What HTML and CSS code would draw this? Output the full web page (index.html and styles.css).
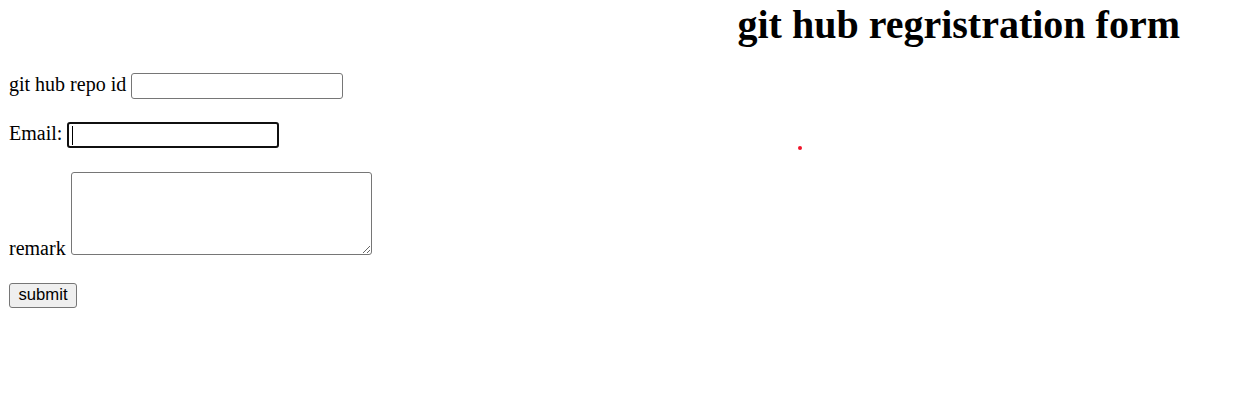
FILE: index.html
```html
<!DOCTYPE html>
<html lang="en">
<head>
<meta charset="utf-8">
<title>git hub regristration form</title>
<link rel="stylesheet" href="styles.css">
</head>
<body>
<h1 class="title">git hub regristration form</h1>
<form class="form">
  <p class="row">git hub repo id <input class="field" type="text"></p>
  <p class="row">Email: <span class="focus-wrap"><input class="field field-focus" type="email"><span class="caret"></span></span></p>
  <p class="row row-remark">remark <textarea class="remark"></textarea></p>
  <p class="row row-submit"><button class="submit" type="button">submit</button></p>
</form>
<span class="dot"></span>
</body>
</html>
```
FILE: styles.css
```css
html, body {
  background: #fff;
}
body {
  margin: 0 10px 10px 9px;
  font-family: "Liberation Serif", "Times New Roman", serif;
  font-size: 20px;
  color: #000;
  position: relative;
}
.title {
  margin: 0;
  padding-top: 1px;
  font-size: 40px;
  font-weight: bold;
  text-align: right;
  padding-right: 52px;
}
.form {
  margin: 0;
  padding-top: 2px;
}
.row {
  margin: 23px 0;
}
.row-remark {
  margin-top: 24px;
  margin-bottom: 22px;
}
.row-submit {
  margin-top: 22px;
}
.field {
  box-sizing: border-box;
  width: 212px;
  height: 26px;
  border: 1px solid #767676;
  border-radius: 3px;
  padding: 2px 4px;
  font-family: "Liberation Sans", Arial, sans-serif;
  font-size: 16.67px;
  margin: 0;
  background: #fff;
  vertical-align: baseline;
}
.focus-wrap {
  position: relative;
  display: inline-block;
}
.field-focus {
  border: 2px solid #101010;
  outline: none;
}
.caret {
  position: absolute;
  left: 5px;
  top: 4px;
  width: 1px;
  height: 19px;
  background: #000;
}
.remark {
  box-sizing: border-box;
  width: 301px;
  height: 83px;
  border: 1px solid #767676;
  border-radius: 3px;
  padding: 2px;
  margin: 0;
  font-family: "Liberation Mono", monospace;
  font-size: 16.67px;
  vertical-align: baseline;
}
.submit {
  box-sizing: border-box;
  width: 68px;
  height: 25px;
  margin: 0;
  padding: 1px 7px;
  background: #efefef;
  border: 1px solid #767676;
  border-radius: 3px;
  font-family: "Liberation Sans", Arial, sans-serif;
  font-size: 16.67px;
  color: #000;
}
.dot {
  position: absolute;
  left: 789px;
  top: 146px;
  width: 4px;
  height: 4px;
  border-radius: 50%;
  background: #f0142a;
}
```
